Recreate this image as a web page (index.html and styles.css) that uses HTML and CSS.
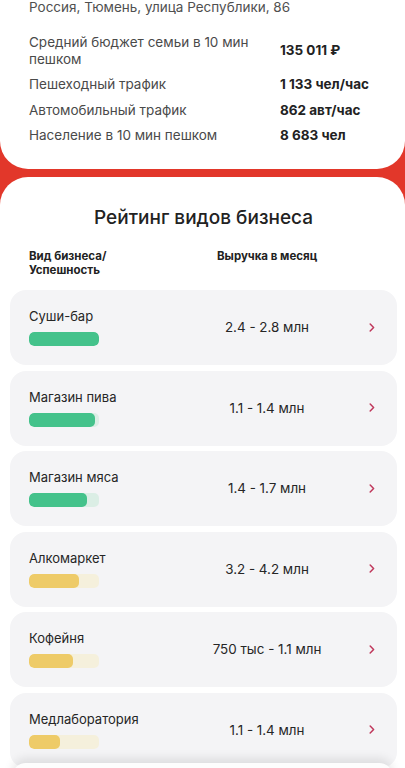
FILE: index.html
```html
<!DOCTYPE html>
<html lang="ru">
<head>
<meta charset="utf-8">
<link rel="stylesheet" href="styles.css">
</head>
<body>
<div class="info">
  <div class="address">Россия, Тюмень, улица Республики, 86</div>
  <div class="stats">
    <div class="stat"><span class="k">Средний бюджет семьи в 10 мин пешком</span><span class="v">135 011 ₽</span></div>
    <div class="stat"><span class="k">Пешеходный трафик</span><span class="v">1 133 чел/час</span></div>
    <div class="stat"><span class="k">Автомобильный трафик</span><span class="v">862 авт/час</span></div>
    <div class="stat"><span class="k">Население в 10 мин пешком</span><span class="v">8 683 чел</span></div>
  </div>
</div>
<div class="rating">
  <h2 class="title">Рейтинг видов бизнеса</h2>
  <div class="head">
    <span>Вид бизнеса/<br>Успешность</span>
    <span class="hv">Выручка в месяц</span>
  </div>
  <div class="list">
    <div class="row">
      <div class="name"><span>Суши-бар</span><div class="track green"><div class="fill" style="width:100%"></div></div></div>
      <div class="val">2.4 - 2.8 млн</div>
      <svg class="chev" viewBox="0 0 6 9"><path d="M1.2 1 L4.6 4.5 L1.2 8" /></svg>
    </div>
    <div class="row">
      <div class="name"><span>Магазин пива</span><div class="track green"><div class="fill" style="width:94%"></div></div></div>
      <div class="val">1.1 - 1.4 млн</div>
      <svg class="chev" viewBox="0 0 6 9"><path d="M1.2 1 L4.6 4.5 L1.2 8" /></svg>
    </div>
    <div class="row">
      <div class="name"><span>Магазин мяса</span><div class="track green"><div class="fill" style="width:83%"></div></div></div>
      <div class="val">1.4 - 1.7 млн</div>
      <svg class="chev" viewBox="0 0 6 9"><path d="M1.2 1 L4.6 4.5 L1.2 8" /></svg>
    </div>
    <div class="row">
      <div class="name"><span>Алкомаркет</span><div class="track yellow"><div class="fill" style="width:72%"></div></div></div>
      <div class="val">3.2 - 4.2 млн</div>
      <svg class="chev" viewBox="0 0 6 9"><path d="M1.2 1 L4.6 4.5 L1.2 8" /></svg>
    </div>
    <div class="row">
      <div class="name"><span>Кофейня</span><div class="track yellow"><div class="fill" style="width:63%"></div></div></div>
      <div class="val">750 тыс - 1.1 млн</div>
      <svg class="chev" viewBox="0 0 6 9"><path d="M1.2 1 L4.6 4.5 L1.2 8" /></svg>
    </div>
    <div class="row">
      <div class="name"><span>Медлаборатория</span><div class="track yellow"><div class="fill" style="width:44%"></div></div></div>
      <div class="val">1.1 - 1.4 млн</div>
      <svg class="chev" viewBox="0 0 6 9"><path d="M1.2 1 L4.6 4.5 L1.2 8" /></svg>
    </div>
  </div>
</div>
<div class="sheet"></div>
</body>
</html>
```
FILE: styles.css
```css
html, body {
  margin: 0;
  padding: 0;
}
body {
  background: #e2372a;
  font-family: Inter, Roboto, "Liberation Sans", Arial, sans-serif;
  color: #222;
  overflow: hidden;
  height: 768px;
}
.info {
  background: #fff;
  border-radius: 0 0 28px 28px;
  padding: 0 20px 25px 29px;
}
.address {
  font-size: 13.5px;
  line-height: 18px;
  margin-top: -2px;
  color: #505050;
}
.stats {
  margin-top: 17.5px;
  display: flex;
  flex-direction: column;
  gap: 8.5px;
}
.stat {
  display: grid;
  grid-template-columns: 251px 1fr;
  align-items: center;
  font-size: 13.5px;
  line-height: 17px;
}
.k {
  color: #4a4a4a;
}
.v {
  font-weight: 700;
  color: #222;
}
.rating {
  margin-top: 8px;
  background: #fff;
  border-radius: 28px 28px 0 0;
  padding: 27px 8px 0 10px;
  min-height: 600px;
}
.title {
  margin: 0;
  text-align: center;
  font-size: 19px;
  line-height: 28px;
  font-weight: 500;
  color: #222;
}
.head {
  margin-top: 17px;
  padding-left: 19px;
  display: grid;
  grid-template-columns: 188px 1fr;
  font-size: 11.5px;
  line-height: 14px;
  font-weight: 700;
  color: #222;
}
.list {
  margin-top: 13px;
  display: flex;
  flex-direction: column;
  gap: 5.6px;
}
.row {
  background: #f4f4f6;
  border-radius: 16px;
  height: 75px;
  flex: none;
  box-sizing: border-box;
  padding: 18px 0 19px 19px;
  display: grid;
  grid-template-columns: 160px 156px 1fr;
  align-items: center;
}
.name {
  display: flex;
  flex-direction: column;
  gap: 8px;
  font-size: 13px;
  line-height: 16px;
  color: #262626;
}
.track {
  width: 70px;
  height: 14px;
  border-radius: 5px;
  overflow: hidden;
}
.fill {
  height: 100%;
  border-radius: 5px;
}
.green { background: #dbeee5; }
.green .fill { background: #44c28b; }
.yellow { background: #f5f0dc; }
.yellow .fill { background: #eecb68; }
.val {
  text-align: center;
  font-size: 13.4px;
  line-height: 16px;
  color: #262626;
}
.chev {
  width: 6px;
  height: 9px;
  margin-left: 24px;
  fill: none;
  stroke: #c0385c;
  stroke-width: 1.5;
  stroke-linecap: round;
  stroke-linejoin: round;
}
.sheet {
  position: fixed;
  left: 12px;
  right: 12px;
  top: 763px;
  height: 40px;
  background: #fdfdfd;
  border-radius: 14px 14px 0 0;
  box-shadow: 0 -5px 10px rgba(0, 0, 0, 0.09);
}
```
